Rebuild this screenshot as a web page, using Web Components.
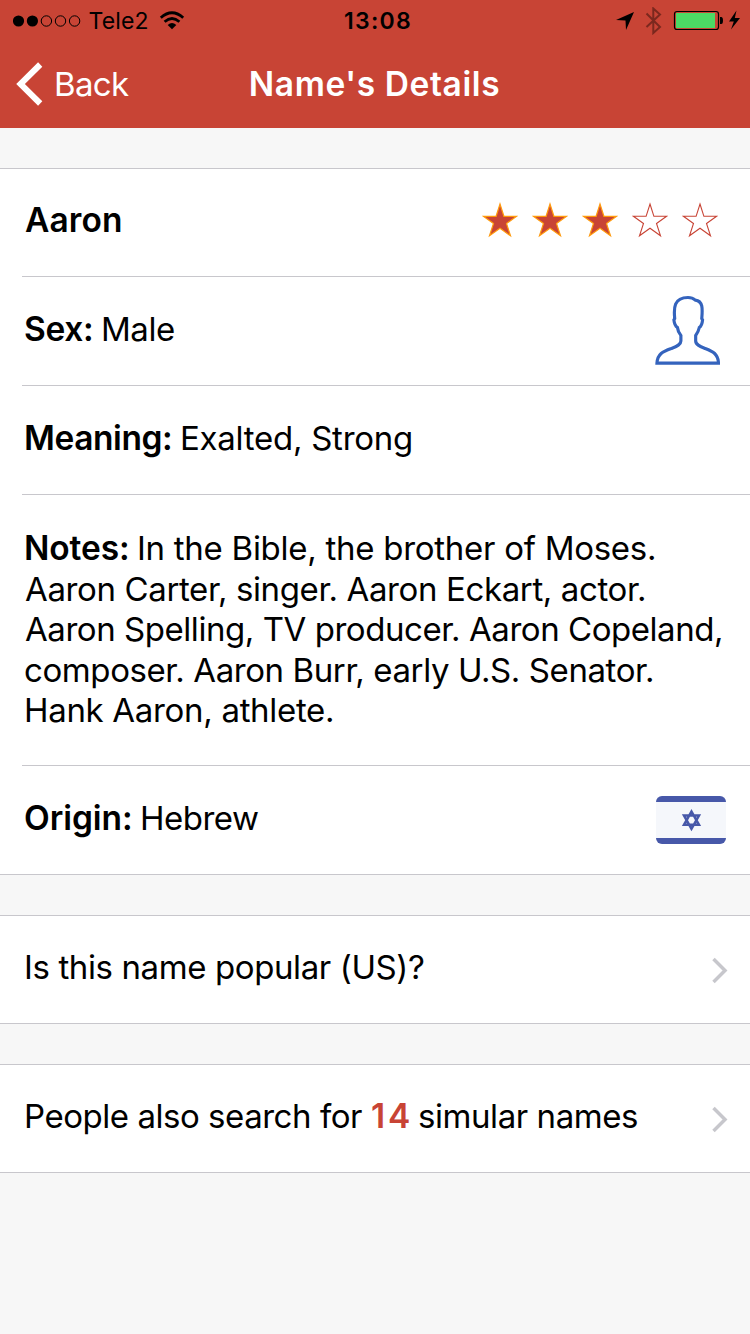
<!DOCTYPE html>
<html lang="en">
<head>
<meta charset="utf-8">
<title>Name's Details</title>
<style>
html, body { margin: 0; height: 100%; }
body { font: 400 33px Inter, "Liberation Sans", sans-serif; font-optical-sizing: none; background: #f7f7f7; color: #000; overflow: hidden; }
</style>
</head>
<body>
<name-details-screen></name-details-screen>
<script>
function define(name, html, setup) {
  const template = document.createElement('template');
  template.innerHTML = html.trim();
  customElements.define(name, class extends HTMLElement {
    connectedCallback() {
      if (this.shadowRoot) return;
      this.attachShadow({ mode: 'open' }).append(template.content.cloneNode(true));
      if (setup) setup(this);
    }
  });
}

/* A run of text tracked so that its ink fills exactly the given width. */
const pen = document.createElement('canvas').getContext('2d');
define('text-run', `
<style>
  :host { display: inline-block; flex: none; white-space: pre; }
  :host([bold]) { font-weight: 620; font-size: 33.5px; font-variation-settings: "opsz" 14; }
</style><slot></slot>`, el => {
  const style = getComputedStyle(el);
  const text = el.textContent;
  const width = Number(el.getAttribute('width'));
  pen.font = style.fontWeight + ' ' + style.fontSize + ' Inter';
  const m = pen.measureText(text);
  const left = -m.actualBoundingBoxLeft;
  const right = m.width - m.actualBoundingBoxRight;
  const natural = el.getBoundingClientRect().width;
  const spacing = (width - (natural - left - right)) / (text.length - 1);
  el.style.letterSpacing = spacing + 'px';
  el.style.marginLeft = Number(el.getAttribute('gap') || 0) - left + 'px';
  el.style.marginRight = -right - spacing + 'px';
});

define('status-bar', `
<style>
  :host { display: grid; grid-template-columns: 1fr auto 1fr; align-items: center; height: 41px; font-size: 23px; box-sizing: border-box; padding: 0 10px 0 13px; }
  .left, .right { display: flex; align-items: center; }
  .right { justify-content: flex-end; }
  .time { font-weight: 600; padding-left: 2px; }
  svg { display: block; flex: none; }
</style>
<div class="left">
  <svg width="68" height="12" viewBox="0 0 68 12"><circle cx="5.5" cy="6" r="5.6"/><circle cx="19.4" cy="6" r="5.6"/><g fill="none" stroke="#000"><circle cx="33.4" cy="6" r="5.2"/><circle cx="47.5" cy="6" r="5.2"/><circle cx="61.6" cy="6" r="5.2"/></g></svg>
  <text-run width="58" gap="8.5">Tele2</text-run>
  <svg width="26" height="19" viewBox="0 0 26 19" style="margin-left:11.5px"><path d="M13 18.2 8.7 13.9Q13 10.3 17.3 13.9Z"/><path d="M5.6 10.8Q13 4.3 20.4 10.8M1.8 6.8Q13-3.2 24.2 6.8" fill="none" stroke="#000" stroke-width="2.8"/></svg>
</div>
<div class="time"><text-run width="65">13:08</text-run></div>
<div class="right">
  <svg width="124" height="28" viewBox="0 0 124 28">
    <path d="M0 13 18 5 10 23 9.5 13.5Z"/>
    <path d="m30.5 6.5 13.500 13.500-6.700 6V1.500l6.700 6L30.500 20" fill="none" stroke="#7b281e" stroke-width="2"/>
    <rect x="58.5" y="4.5" width="44" height="18" rx="2.5" fill="none" stroke="#000" stroke-width="1.2"/>
    <rect x="60" y="6" width="39" height="15" fill="#4cd964"/>
    <path d="M104 10h1.200q1.800 0 1.800 3.500t-1.800 3.500H104Z"/>
    <path d="m120.500 3.500-7.500 11h4.800L115 22.500l9-11.500h-5.200Z"/>
  </svg>
</div>`);

define('nav-bar', `
<style>
  :host { display: grid; grid-template-columns: 1fr auto 1fr; align-items: center; height: 86px; padding: 0 0 0 16px; color: #fff; margin-right: 16px; }
  .back { display: flex; align-items: center; }
  svg { display: block; }
</style>
<div class="back">
  <svg width="27" height="44" viewBox="0 0 27 44"><path d="M24.2 2.500 4.500 22l19.700 19.500" fill="none" stroke="#fff" stroke-width="6"/></svg>
  <text-run width="73" gap="13">Back</text-run>
</div>
<div><text-run bold width="248.500">Name's Details</text-run></div>`);

define('list-group', `
<style>
  :host { display: block; margin-top: 40px; background: #fff; border-top: 1px solid #c8c7cc; border-bottom: 1px solid #c8c7cc; }
</style><slot></slot>`);

define('list-row', `
<style>
  :host { display: flex; align-items: center; justify-content: space-between; height: 108px; padding: 0 24px 0 25px; }
  :host([first]) { height: 107px; }
  .text { display: flex; align-items: baseline; padding-bottom: 4px; line-height: 40px; }
  :host([first]) .text { padding-bottom: 5px; }
  :host([divided]) { position: relative; }
  :host([divided])::after { content: ""; position: absolute; left: 22px; right: 0; bottom: -1px; height: 1px; background: #c8c7cc; }
  :host([divided]) { margin-bottom: 1px; }
</style>
<div class="text"><slot></slot></div><slot name="accessory"></slot>`);

define('notes-row', `
<style>
  :host { display: block; position: relative; height: 237px; padding: 33px 0 0 25px; margin-bottom: 1px; line-height: 40.5px; }
  :host::after { content: ""; position: absolute; left: 22px; right: 0; bottom: -1px; height: 1px; background: #c8c7cc; }
  div { display: flex; align-items: baseline; height: 40.5px; }
</style>
<div><text-run bold width="101" gap="1">Notes:</text-run><text-run gap="12" width="515">In the Bible, the brother of Moses.</text-run></div>
<div><text-run width="619">Aaron Carter, singer. Aaron Eckart, actor.</text-run></div>
<div><text-run width="696">Aaron Spelling, TV producer. Aaron Copeland,</text-run></div>
<div><text-run width="627">composer. Aaron Burr, early U.S. Senator.</text-run></div>
<div><text-run gap="1" width="306">Hank Aaron, athlete.</text-run></div>`);

define('star-rating', `
<style>
  :host { display: flex; gap: 14px; margin-right: 8px; padding-bottom: 5px; }
  svg { display: block; }
</style>`, el => {
  const value = Number(el.getAttribute('value'));
  for (let i = 0; i < 5; i++) {
    const paint = i < value ? 'fill="#c84435" stroke="#ff9a0c" stroke-width="1.2"' : 'fill="none" stroke="#c84435" stroke-width="1.1"';
    el.shadowRoot.innerHTML += `<svg width="36" height="36" viewBox="0 0 36 36"><path ${paint} d="M18 2l3.900 12.300H34.600L24.500 21.500l4 12.300L18 26.300 7.500 33.800l4-12.300L1.400 14.300H14.100Z"/></svg>`;
  }
});

define('person-icon', `
<style>:host { display: block; margin-right: 6.500px; } svg { display: block; }</style>
<svg width="66" height="72" viewBox="0 0 67 72" preserveAspectRatio="none"><path d="M3 68.200C3.500 59 9 56.500 17.500 53.500C23 51.300 27.300 49.800 27.300 46V40.500Q24.300 37 23.800 32.500Q20.800 30.500 20.200 24.800L21 23.500C20 13 20 2.500 34.500 2.500Q39 2.500 42 5.100C50.500 6 49 16 48.500 23.500L49.300 24.800Q48.800 30.500 46 32.500Q45 37 42.300 40.500V46C42.300 49.800 46.500 51.300 52 53.500C60 56.500 65 59 65.500 68.200Z" fill="none" stroke="#3463bd" stroke-width="3.200"/></svg>`);

define('israel-flag', `
<style>:host { display: block; } svg { display: block; }</style>
<svg width="70" height="48" viewBox="0 0 70 48"><defs><clipPath id="c"><rect width="70" height="48" rx="6"/></clipPath></defs><g clip-path="url(#c)"><path fill="#f5f7fb" d="M0 0h70v48H0z"/><path fill="#4758a9" d="M0 0h70v6H0zM0 42h70v6H0z"/></g><path d="M35.500 15.500 43 28.800H28ZM35.500 32.800 28 19.500H43Z" fill="none" stroke="#4758a9" stroke-width="2.500"/></svg>`);

define('disclosure-chevron', `
<style>:host { display: block; margin: 1px -3px 0 0; } svg { display: block; }</style>
<svg width="18" height="27" viewBox="0 0 18 27"><path d="m2.500 2 11.500 11.500L2.500 25" fill="none" stroke="#c7c7cc" stroke-width="3.500"/></svg>`);

define('name-details-screen', `
<style>
  :host { display: block; }
  header { background: #c84435; height: 128px; }
  .accent { color: #c84435; }
</style>
<header><status-bar></status-bar><nav-bar></nav-bar></header>
<list-group>
  <list-row first divided><text-run bold width="96">Aaron</text-run><star-rating slot="accessory" value="3"></star-rating></list-row>
  <list-row divided><text-run bold width="66">Sex:</text-run><text-run gap="12" width="71">Male</text-run><person-icon slot="accessory"></person-icon></list-row>
  <list-row divided><text-run bold gap="1" width="144">Meaning:</text-run><text-run gap="12" width="229">Exalted, Strong</text-run></list-row>
  <notes-row></notes-row>
  <list-row><text-run bold width="105">Origin:</text-run><text-run gap="12" width="116">Hebrew</text-run><israel-flag slot="accessory"></israel-flag></list-row>
</list-group>
<list-group>
  <list-row first><text-run gap="1" width="398">Is this name popular (US)?</text-run><disclosure-chevron slot="accessory"></disclosure-chevron></list-row>
</list-group>
<list-group>
  <list-row first><text-run gap="1" width="336">People also search for</text-run><text-run class="accent" bold gap="10" width="37">14</text-run><text-run gap="10" width="218">simular names</text-run><disclosure-chevron slot="accessory"></disclosure-chevron></list-row>
</list-group>`);
</script>
</body>
</html>
